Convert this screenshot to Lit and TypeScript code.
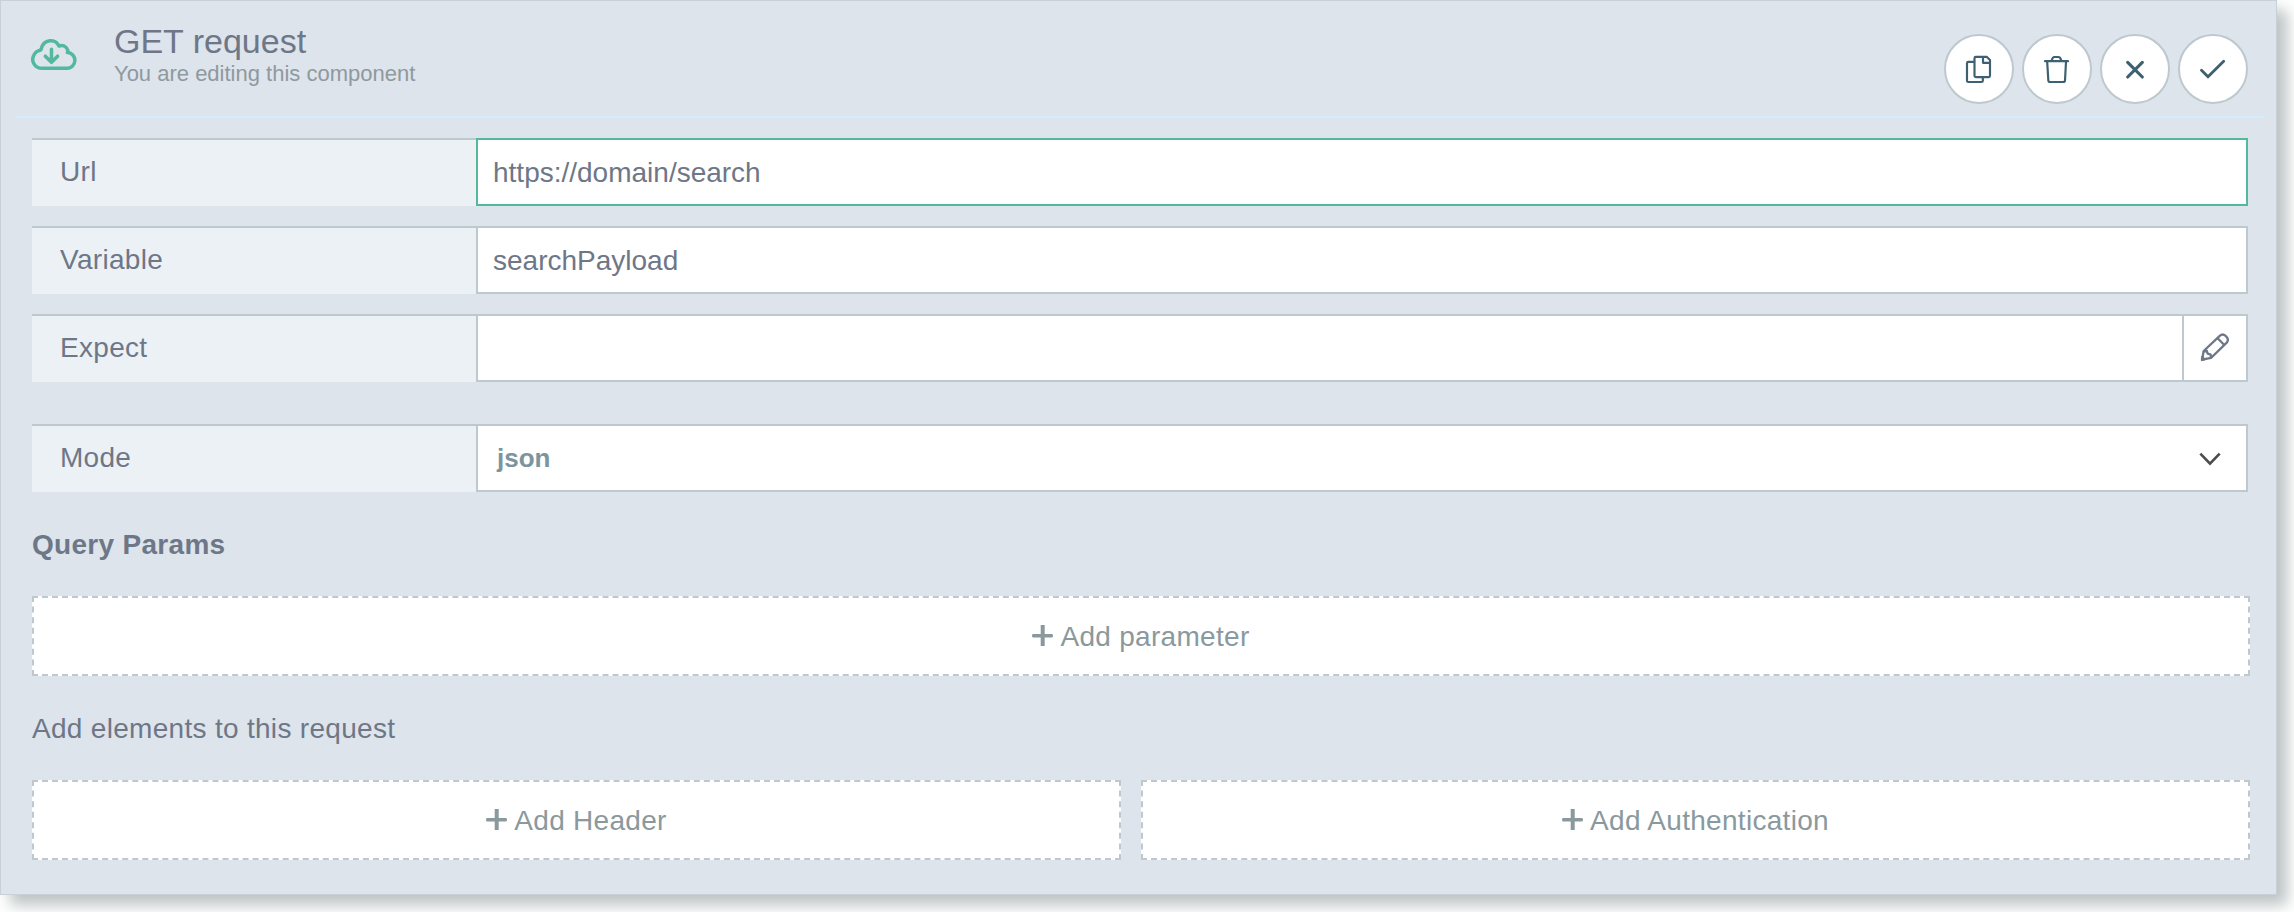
import { LitElement, html, css, svg } from "lit";
import { customElement, property } from "lit/decorators.js";

const cloudIcon = html`<svg class="cloud" viewBox="90 114 142 99" fill="none" stroke="currentColor" stroke-width="10.500" stroke-linecap="round" stroke-linejoin="round">
  <path d="M127 205H200A23.500 23.500 0 0 0 202 157.500Q205 155 203 150C199 139 188 134 177 138C168 116 130 114 123 149C118 153 110 152 104 161C90 181 103 205 127 205Z"/>
  <path d="M154.500 148V187M136 168.500L154.500 187L173 168.500"/>
</svg>`;

const actionIcons = {
  copy: svg`<path d="M162.500 185.500H145a4 4 0 0 0-4 4V242a4 4 0 0 0 4 4H184.500a4 4 0 0 0 4-4V233"/>
    <path d="M167.500 170.500H200L210 180V227.500a4 4 0 0 1-4 4H167.500a4 4 0 0 1-4-4V174.500a4 4 0 0 1 4-4ZM189 171V188.500H210"/>`,
  trash: svg`<path d="M141 183.500H210M161 182C163 173 165 171 169 171H181C186 171 188 174 190 182M147.500 185L151 241Q151.500 246 156 246H196Q200.500 246 201 241L204 185"/>`,
  close: svg`<path stroke-width="9.500" d="M155 187L199 231M199 187L155 231"/>`,
  check: svg`<path stroke-width="8.500" stroke-linejoin="miter" d="M142.500 211L162 230.500L209 184"/>`,
};

const pencilIcon = html`<svg class="pencil" viewBox="239 367 91 91" fill="none" stroke="currentColor" stroke-width="7" stroke-linejoin="round">
  <path d="M245.500 450L250 424L299 378Q307 371 315 378L319 382Q326 390 320 398L272 445ZM291 385L312 406M250 425L259 423L262 432L271 435L272 445"/>
  <path fill="currentColor" d="M245.500 442L252 449L245 451Z"/>
</svg>`;

const chevronIcon = html`<svg class="chevron" viewBox="238 727 66 42" fill="none" stroke="currentColor" stroke-width="8">
  <path d="M242 732L271 762L300 732"/>
</svg>`;

const plusIcon = html`<svg class="plus" viewBox="0 0 21 21" fill="currentColor">
  <path d="M8.700 0h4v9H20q1 0 1 1.750t-1 1.750h-7.300V21h-4v-8.500H1q-1 0-1-1.750T1 9h7.700z"/>
</svg>`;

@customElement("field-row")
export class FieldRow extends LitElement {
  @property() label = "";
  @property() value = "";
  @property() kind = "text";

  static styles = css`
    :host { display: block; }
    .row { display: flex; height: 68px; color: #6e7787; }
    .label {
      box-sizing: border-box; width: 444px; padding: 14px 0 0 28px;
      border-top: 2px solid #bdc8cf; background: #ecf1f6;
      font-size: 28px; line-height: 36px; letter-spacing: 0.3px;
    }
    .control {
      box-sizing: border-box; flex: 1; display: flex;
      border: 2px solid #bdc8cf; background: #fff;
      font-size: 28px; line-height: 36px;
    }
    .focus { border-color: #52b89e; }
    .value { flex: 1; padding: 15px 0 0 15px; }
    .select { padding: 14px 0 0 19px; font-size: 26px; font-weight: 700; color: #7c959d; }
    .edit { display: flex; width: 62px; border-left: 2px solid #bdc8cf; }
    .pencil { width: 30.3px; height: 30.3px; margin: 16.3px 0 0 15.700px; }
    .chevron { width: 22px; height: 14px; margin: 26.300px 24.700px 0 0; color: #4a4d4f; }
  `;

  render() {
    return html`<div class="row">
      <div class="label">${this.label}</div>
      <div class="control ${this.kind === "focus" ? "focus" : ""}">
        <div class="value ${this.kind === "select" ? "select" : ""}">${this.value}</div>
        ${this.kind === "edit" ? html`<div class="edit">${pencilIcon}</div>` : ""}
        ${this.kind === "select" ? chevronIcon : ""}
      </div>
    </div>`;
  }
}

@customElement("app-root")
export class AppRoot extends LitElement {
  static styles = css`
    :host {
      display: block; height: 912px; overflow: hidden; background: #fff;
      font-family: "Liberation Sans", Arial, sans-serif; color: #6e7787;
    }
    .panel {
      box-sizing: border-box; width: 2277px; height: 895px;
      padding: 15px 10px 0 13px; border: 1px solid #c8d1d5;
      background: #dde4ec; box-shadow: 10px 10px 14px rgba(60, 75, 75, 0.34);
    }
    .head {
      box-sizing: border-box; height: 102px; display: flex;
      border: 0 solid #d4edfe; border-bottom-width: 2px; border-radius: 4px;
    }
    .cloud { width: 47.3px; height: 33px; margin: 22px 0 0 16px; color: #52b89e; }
    .titles { flex: 1; padding: 6px 0 0 36.700px; }
    .title { font-size: 34px; line-height: 38px; }
    .sub { font-size: 22px; line-height: 28px; color: #8f999e; }
    .actions { display: flex; gap: 8px; padding: 18px 18px 0 0; }
    .action {
      box-sizing: border-box; width: 70px; height: 70px;
      border: 2px solid #bdc8cf; border-radius: 50%; background: #fff; color: #3d6170;
    }
    .action svg { display: block; width: 66px; height: 66px; }
    .body { padding: 20px 16px 0 18px; }
    .fields { display: grid; gap: 20px; padding-right: 2px; }
    .gap { margin-top: 22px; }
    .heading { font-size: 28px; line-height: 32px; letter-spacing: 0.3px; }
    .strong { font-weight: 700; margin-top: 37px; }
    .plain { margin-top: 37px; }
    .adds { display: flex; gap: 20px; margin-top: 35px; }
    .add {
      box-sizing: border-box; flex: 1; height: 80px; display: flex; justify-content: center;
      border: 2px dashed #bdc8cf; background: #fff; color: #8a999d;
      font-size: 28px; line-height: 36px; letter-spacing: 0.3px;
    }
    .narrow { flex: none; width: 1089px; }
    .plus { width: 21px; height: 21px; margin: 27px 7px 0 0; }
    .caption { padding-top: 21px; }
  `;

  private addButton(text: string, extra = "") {
    return html`<div class="add ${extra}">${plusIcon}<span class="caption">${text}</span></div>`;
  }

  render() {
    return html`<div class="panel">
      <div class="head">
        ${cloudIcon}
        <div class="titles">
          <div class="title">GET request</div>
          <div class="sub">You are editing this component</div>
        </div>
        <div class="actions">
          ${Object.values(actionIcons).map(
            (icon) => html`<div class="action"><svg viewBox="78 108 198 198" fill="none" stroke="currentColor" stroke-width="6.500" stroke-linecap="round" stroke-linejoin="round">${icon}</svg></div>`
          )}
        </div>
      </div>
      <div class="body">
        <div class="fields">
          <field-row label="Url" value="https://domain/search" kind="focus"></field-row>
          <field-row label="Variable" value="searchPayload"></field-row>
          <field-row label="Expect" kind="edit"></field-row>
          <field-row class="gap" label="Mode" value="json" kind="select"></field-row>
        </div>
        <div class="heading strong">Query Params</div>
        <div class="adds">${this.addButton("Add parameter")}</div>
        <div class="heading plain">Add elements to this request</div>
        <div class="adds">${this.addButton("Add Header", "narrow")}${this.addButton("Add Authentication")}</div>
      </div>
    </div>`;
  }
}
